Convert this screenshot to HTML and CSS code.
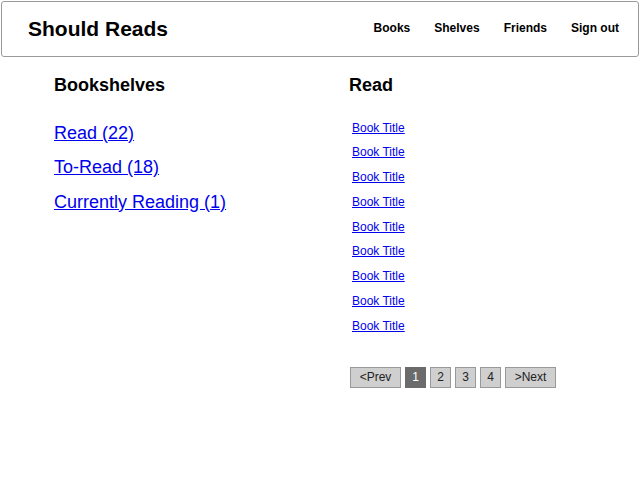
FILE: index.html
```html
<!DOCTYPE html>
<html lang="en">
<head>
<meta charset="utf-8">
<title>Should Reads</title>
<link rel="stylesheet" href="styles.css">
</head>
<body>
<header class="topbar">
  <div class="brand">Should Reads</div>
  <nav class="nav">
    <a class="nav-link" href="#">Books</a>
    <a class="nav-link" href="#">Shelves</a>
    <a class="nav-link" href="#">Friends</a>
    <a class="nav-link" href="#">Sign out</a>
  </nav>
</header>
<main class="content">
  <section class="shelves">
    <h2 class="heading">Bookshelves</h2>
    <ul class="shelf-list">
      <li><a class="shelf-link" href="#">Read (22)</a></li>
      <li><a class="shelf-link" href="#">To-Read (18)</a></li>
      <li><a class="shelf-link" href="#">Currently Reading (1)</a></li>
    </ul>
  </section>
  <section class="books">
    <h2 class="heading">Read</h2>
    <ul class="book-list">
      <li><a class="book-link" href="#">Book Title</a></li>
      <li><a class="book-link" href="#">Book Title</a></li>
      <li><a class="book-link" href="#">Book Title</a></li>
      <li><a class="book-link" href="#">Book Title</a></li>
      <li><a class="book-link" href="#">Book Title</a></li>
      <li><a class="book-link" href="#">Book Title</a></li>
      <li><a class="book-link" href="#">Book Title</a></li>
      <li><a class="book-link" href="#">Book Title</a></li>
      <li><a class="book-link" href="#">Book Title</a></li>
    </ul>
    <div class="pager">
      <a class="page-btn page-wide" href="#">&lt;Prev</a>
      <a class="page-btn page-active" href="#">1</a>
      <a class="page-btn" href="#">2</a>
      <a class="page-btn" href="#">3</a>
      <a class="page-btn" href="#">4</a>
      <a class="page-btn page-wide" href="#">&gt;Next</a>
    </div>
  </section>
</main>
</body>
</html>
```
FILE: styles.css
```css
html, body {
  margin: 0;
  padding: 0;
  background: #fff;
}

body {
  font-family: "Liberation Sans", Arial, sans-serif;
  color: #000;
}

.topbar {
  margin: 1px;
  height: 54px;
  border: 1px solid #9a9a9a;
  border-radius: 3px;
  display: flex;
  align-items: center;
  justify-content: space-between;
  padding: 0 19px 0 26px;
}

.brand {
  font-size: 21px;
  font-weight: bold;
  line-height: 24px;
}

.nav {
  display: flex;
  gap: 24px;
  padding-bottom: 2px;
}

.nav-link {
  font-size: 12px;
  font-weight: bold;
  color: #000;
  text-decoration: none;
  line-height: 14px;
}

.content {
  display: grid;
  grid-template-columns: 295px 1fr;
  padding: 17px 0 0 54px;
}

.heading {
  margin: 0;
  font-size: 18px;
  font-weight: bold;
  line-height: 20px;
}

.shelf-list {
  list-style: none;
  margin: 27.5px 0 0;
  padding: 0;
  display: flex;
  flex-direction: column;
  gap: 14.5px;
  font-size: 18px;
  line-height: 20px;
}

.shelf-link {
  color: #0000ee;
}

.book-list {
  list-style: none;
  margin: 25.5px 0 0;
  padding: 0 0 0 3px;
  display: flex;
  flex-direction: column;
  gap: 9.8px;
  font-size: 12px;
  line-height: 15px;
}

.book-link {
  color: #0000ee;
}

.pager {
  display: flex;
  gap: 4px;
  margin-top: 33.5px;
  padding-left: 1px;
}

.page-btn {
  box-sizing: border-box;
  width: 21px;
  height: 21px;
  border: 1px solid #999;
  background: #cfcfcf;
  color: #222;
  font-size: 12px;
  line-height: 19px;
  text-align: center;
  text-decoration: none;
}

.page-wide {
  width: 51px;
}

.page-active {
  background: #6b6b6b;
  border-color: #6b6b6b;
  color: #fff;
}
```
